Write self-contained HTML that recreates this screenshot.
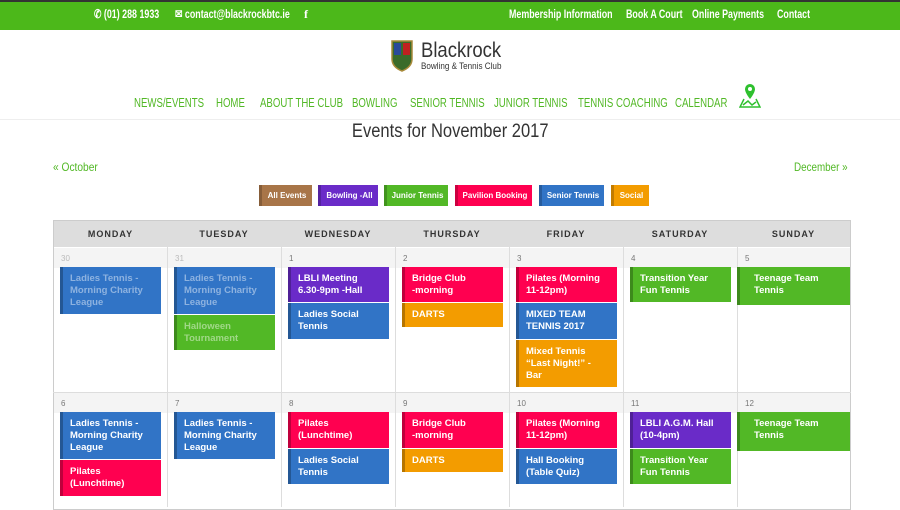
<!DOCTYPE html>
<html><head><meta charset="utf-8"><style>
*{margin:0;padding:0;box-sizing:border-box}
body{width:900px;height:507px;overflow:hidden;background:#fff;font-family:"Liberation Sans",sans-serif;position:relative}
.a{position:absolute}
.n{display:inline-block;transform:scaleX(.74);transform-origin:left top;white-space:nowrap}
.top{left:0;top:0;width:900px;height:30px;background:#4cb81a;border-top:2px solid #333}
.tt span{position:absolute;top:7px;color:#fff;font-size:12px;font-weight:bold}
.nav span{position:absolute;top:95px;color:#52b826;font-size:13px}
.lg{position:absolute;top:185px;height:21px;color:#fff;font-size:8px;font-weight:bold;text-align:center;line-height:21px;border-left:3px solid rgba(0,0,0,.2)}
.hd{position:absolute;top:221px;height:26px;background:#ddd;font-size:9px;font-weight:bold;color:#333;text-align:center;line-height:26px;letter-spacing:1px}
.dn{position:absolute;height:20px;background:#f4f4f4;font-size:8px;color:#777;padding:6px 0 0 7px}
.e{position:absolute;color:#fff;font-size:9.5px;font-weight:bold;line-height:12px;padding:6px 0 0 7px;border-left:3px solid rgba(0,0,0,.25);white-space:nowrap;overflow:hidden}
.f{color:rgba(255,255,255,.45)}
.b{background:#3174c6}.g{background:#52b826}.p{background:#6a2bc8}.r{background:#ff0050}.o{background:#f39c00}
</style></head><body>
<div class="a top"></div>
<div class="tt">
<span class="n" style="left:94px">&#9990; (01) 288 1933</span>
<span class="n" style="left:175px">&#9993; contact@blackrockbtc.ie</span>
<span style="left:304px;font-family:'Liberation Serif'">f</span>
<span class="n" style="left:509px">Membership Information</span>
<span class="n" style="left:626px">Book A Court</span>
<span class="n" style="left:692px">Online Payments</span>
<span class="n" style="left:777px">Contact</span>
</div>
<svg class="a" style="left:390px;top:39px" width="24" height="34"><path d="M2 2h20v18q0 8-10 12Q2 28 2 20z" fill="#3a6b2a" stroke="#a88a3a" stroke-width="1.5"/><rect x="4" y="4" width="7" height="12" fill="#2a4a9a"/><rect x="13" y="4" width="7" height="12" fill="#c02020"/></svg>
<div class="a" style="left:421px;top:39px;font-size:21px;color:#333;transform:scaleX(.88);transform-origin:left">Blackrock</div>
<div class="a" style="left:421px;top:61px;font-size:9px;color:#333;transform:scaleX(.9);transform-origin:left">Bowling &amp; Tennis Club</div>
<div class="nav">
<span class="n" style="left:134px">NEWS/EVENTS</span><span class="n" style="left:216px">HOME</span><span class="n" style="left:260px">ABOUT THE CLUB</span><span class="n" style="left:352px">BOWLING</span><span class="n" style="left:410px">SENIOR TENNIS</span><span class="n" style="left:494px">JUNIOR TENNIS</span><span class="n" style="left:578px">TENNIS COACHING</span><span class="n" style="left:675px">CALENDAR</span>
</div>
<svg class="a" style="left:739px;top:83px" width="22" height="25"><path d="M11 1a5 5 0 0 0-5 5c0 4 5 10 5 10s5-6 5-10a5 5 0 0 0-5-5z" fill="#2ec02e"/><circle cx="11" cy="6" r="2" fill="#fff"/><path d="M5 16l-4 8h20l-4-8M4 22l5-4 4 4 4-3" fill="none" stroke="#2ec02e" stroke-width="1.5"/></svg>
<div class="a" style="left:0;top:119px;width:900px;height:1px;background:#eee"></div>
<div class="a" style="left:0;top:121px;width:900px;text-align:center;font-size:19px;color:#333;transform:scaleX(.87);transform-origin:452px 0">Events for November 2017</div>
<div class="a" style="left:53px;top:160px;font-size:12px;color:#52b826;transform:scaleX(.85);transform-origin:left">« October</div>
<div class="a" style="left:794px;top:160px;font-size:12px;color:#52b826;transform:scaleX(.82);transform-origin:left">December »</div>
<div class="lg" style="left:259px;width:53px;background:#a87548">All Events</div>
<div class="lg" style="left:318px;width:60px;background:#6a2bc8">Bowling -All</div>
<div class="lg" style="left:384px;width:64px;background:#52b826">Junior Tennis</div>
<div class="lg" style="left:455px;width:77px;background:#ff0050">Pavilion Booking</div>
<div class="lg" style="left:539px;width:65px;background:#3174c6">Senior Tennis</div>
<div class="lg" style="left:611px;width:38px;background:#f39c00">Social</div>
<div class="a" style="left:53px;top:220px;width:798px;height:290px;border:1px solid #ccc"></div>
<div class="hd" style="left:54px;width:113px">MONDAY</div><div class="hd" style="left:167px;width:114px">TUESDAY</div><div class="hd" style="left:281px;width:114px">WEDNESDAY</div><div class="hd" style="left:395px;width:114px">THURSDAY</div><div class="hd" style="left:509px;width:114px">FRIDAY</div><div class="hd" style="left:623px;width:114px">SATURDAY</div><div class="hd" style="left:737px;width:113px">SUNDAY</div>
<div class="a" style="left:53px;top:392px;width:798px;height:1px;background:#ddd"></div>
<div class="a" style="left:167px;top:247px;width:1px;height:260px;background:#ddd"></div>
<div class="a" style="left:281px;top:247px;width:1px;height:260px;background:#ddd"></div>
<div class="a" style="left:395px;top:247px;width:1px;height:260px;background:#ddd"></div>
<div class="a" style="left:509px;top:247px;width:1px;height:260px;background:#ddd"></div>
<div class="a" style="left:623px;top:247px;width:1px;height:260px;background:#ddd"></div>
<div class="a" style="left:737px;top:247px;width:1px;height:260px;background:#ddd"></div>
<div class="dn" style="left:54px;top:248px;width:113px;color:#bbb">30</div><div class="dn" style="left:168px;top:248px;width:113px;color:#bbb">31</div><div class="dn" style="left:282px;top:248px;width:113px">1</div><div class="dn" style="left:396px;top:248px;width:113px">2</div><div class="dn" style="left:510px;top:248px;width:113px">3</div><div class="dn" style="left:624px;top:248px;width:113px">4</div><div class="dn" style="left:738px;top:248px;width:112px">5</div>
<div class="dn" style="left:54px;top:393px;width:113px">6</div><div class="dn" style="left:168px;top:393px;width:113px">7</div><div class="dn" style="left:282px;top:393px;width:113px">8</div><div class="dn" style="left:396px;top:393px;width:113px">9</div><div class="dn" style="left:510px;top:393px;width:113px">10</div><div class="dn" style="left:624px;top:393px;width:113px">11</div><div class="dn" style="left:738px;top:393px;width:112px">12</div>

<div class="e b f" style="left:60px;top:267px;width:101px;height:47px">Ladies Tennis -<br>Morning Charity<br>League</div>
<div class="e b f" style="left:174px;top:267px;width:101px;height:47px">Ladies Tennis -<br>Morning Charity<br>League</div>
<div class="e g f" style="left:174px;top:315px;width:101px;height:35px">Halloween<br>Tournament</div>
<div class="e p" style="left:288px;top:267px;width:101px;height:35px">LBLI Meeting<br>6.30-9pm -Hall</div>
<div class="e b" style="left:288px;top:303px;width:101px;height:36px">Ladies Social<br>Tennis</div>
<div class="e r" style="left:402px;top:267px;width:101px;height:35px">Bridge Club<br>-morning</div>
<div class="e o" style="left:402px;top:303px;width:101px;height:24px">DARTS</div>
<div class="e r" style="left:516px;top:267px;width:101px;height:35px">Pilates (Morning<br>11-12pm)</div>
<div class="e b" style="left:516px;top:303px;width:101px;height:36px">MIXED TEAM<br>TENNIS 2017</div>
<div class="e o" style="left:516px;top:340px;width:101px;height:47px">Mixed Tennis<br>“Last Night!” -<br>Bar</div>
<div class="e g" style="left:630px;top:267px;width:101px;height:35px">Transition Year<br>Fun Tennis</div>
<div class="e g" style="left:737px;top:267px;width:113px;height:38px;padding-left:14px">Teenage Team<br>Tennis</div>

<div class="e b" style="left:60px;top:412px;width:101px;height:47px">Ladies Tennis -<br>Morning Charity<br>League</div>
<div class="e r" style="left:60px;top:460px;width:101px;height:36px">Pilates<br>(Lunchtime)</div>
<div class="e b" style="left:174px;top:412px;width:101px;height:47px">Ladies Tennis -<br>Morning Charity<br>League</div>
<div class="e r" style="left:288px;top:412px;width:101px;height:36px">Pilates<br>(Lunchtime)</div>
<div class="e b" style="left:288px;top:449px;width:101px;height:35px">Ladies Social<br>Tennis</div>
<div class="e r" style="left:402px;top:412px;width:101px;height:36px">Bridge Club<br>-morning</div>
<div class="e o" style="left:402px;top:449px;width:101px;height:23px">DARTS</div>
<div class="e r" style="left:516px;top:412px;width:101px;height:36px">Pilates (Morning<br>11-12pm)</div>
<div class="e b" style="left:516px;top:449px;width:101px;height:35px">Hall Booking<br>(Table Quiz)</div>
<div class="e p" style="left:630px;top:412px;width:101px;height:36px">LBLI A.G.M. Hall<br>(10-4pm)</div>
<div class="e g" style="left:630px;top:449px;width:101px;height:35px">Transition Year<br>Fun Tennis</div>
<div class="e g" style="left:737px;top:412px;width:113px;height:39px;padding-left:14px">Teenage Team<br>Tennis</div>
</body></html>
